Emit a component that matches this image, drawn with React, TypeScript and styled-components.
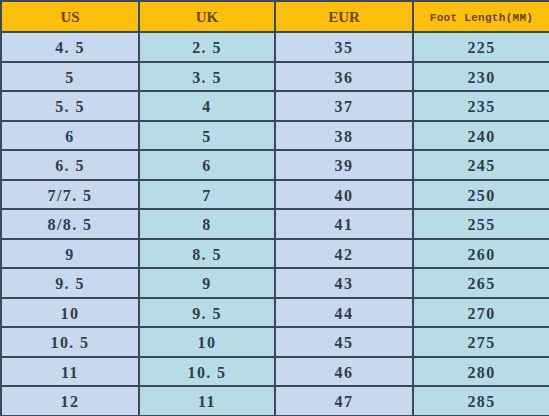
import React from "react";
import styled, { createGlobalStyle } from "styled-components";

const Global = createGlobalStyle`
  html, body { margin: 0; padding: 0; background: #ffffff; }
  body { width: 549px; height: 416px; overflow: hidden; }
`;

const Table = styled.div`
  display: grid;
  grid-template-columns: 138px 136px 138px 137px;
  grid-template-rows: 31px repeat(13, 29.5px);
  width: 549px;
  box-sizing: border-box;
  border-top: 2px solid #3c4957;
  border-left: 2px solid #3c4957;
`;

const HeadCell = styled.div<{ $mono?: boolean }>`
  background: #fcbf0e;
  border-right: 2px solid #3c4957;
  border-bottom: 2px solid #3c4957;
  box-sizing: border-box;
  display: flex;
  align-items: center;
  justify-content: center;
  padding-top: 2px;
  color: #6e4608;
  font-family: ${(p) => (p.$mono ? '"Liberation Mono", monospace' : '"Liberation Serif", serif')};
  font-weight: 700;
  font-size: ${(p) => (p.$mono ? "11px" : "15px")};
  letter-spacing: ${(p) => (p.$mono ? "0.3px" : "0")};
  white-space: pre;
`;

const Cell = styled.div<{ $alt: boolean }>`
  background: ${(p) => (p.$alt ? "#b7dce6" : "#c7d8ef")};
  border-right: 2px solid #3c4957;
  border-bottom: 2px solid #3c4957;
  box-sizing: border-box;
  display: flex;
  align-items: center;
  justify-content: center;
  padding-top: 3px;
  color: #2f3d51;
  font-family: "Liberation Serif", serif;
  font-weight: 700;
  font-size: 16px;
  letter-spacing: 1.4px;
  white-space: pre;
`;

const rows: [string, string, string, string][] = [
  ["4. 5", "2. 5", "35", "225"],
  ["5", "3. 5", "36", "230"],
  ["5. 5", "4", "37", "235"],
  ["6", "5", "38", "240"],
  ["6. 5", "6", "39", "245"],
  ["7/7. 5", "7", "40", "250"],
  ["8/8. 5", "8", "41", "255"],
  ["9", "8. 5", "42", "260"],
  ["9. 5", "9", "43", "265"],
  ["10", "9. 5", "44", "270"],
  ["10. 5", "10", "45", "275"],
  ["11", "10. 5", "46", "280"],
  ["12", "11", "47", "285"],
];

export default function App() {
  return (
    <>
      <Global />
      <Table>
        <HeadCell>US</HeadCell>
        <HeadCell>UK</HeadCell>
        <HeadCell>EUR</HeadCell>
        <HeadCell $mono>Foot Length(MM)</HeadCell>
        {rows.map((r, i) =>
          r.map((v, j) => (
            <Cell key={`${i}-${j}`} $alt={j % 2 === 1}>
              {v}
            </Cell>
          ))
        )}
      </Table>
    </>
  );
}
